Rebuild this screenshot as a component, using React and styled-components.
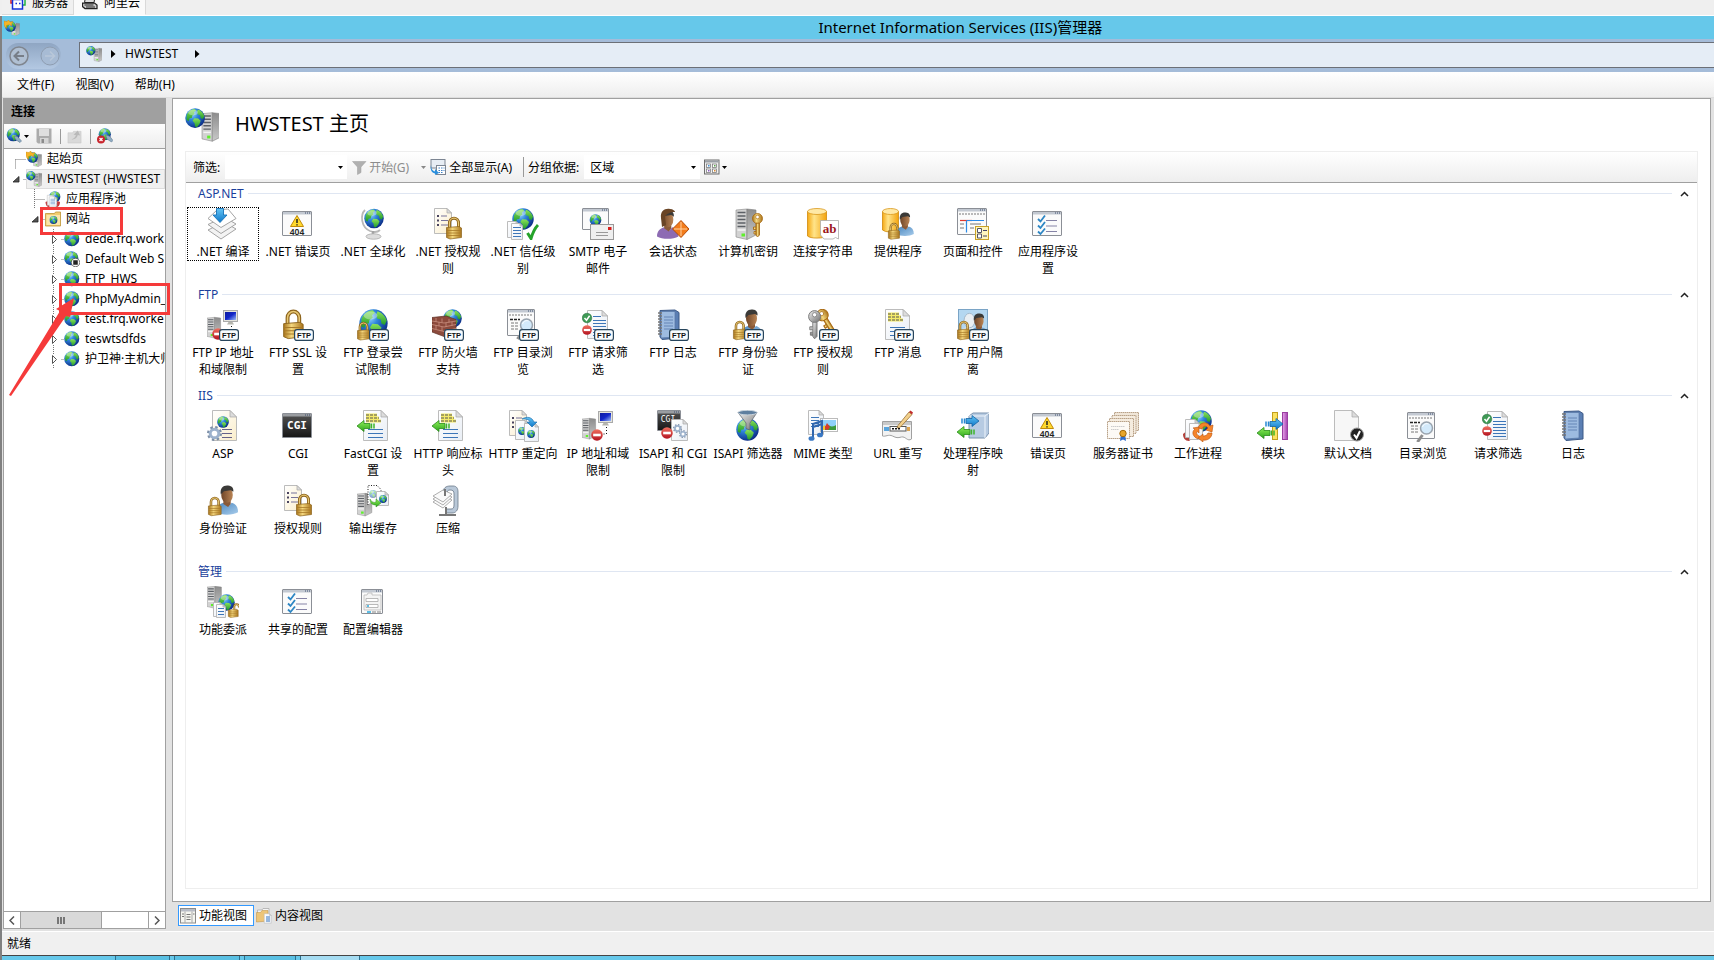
import React, { useState } from 'react'
import styled, { createGlobalStyle } from 'styled-components'

const GlobalStyle = createGlobalStyle`
* {
  box-sizing: border-box;
}
body {
  margin: 0;
  background: #f0f0f0;
  color: #000;
  font-family: 'Noto Sans', 'Noto Sans CJK SC', sans-serif;
  font-size: 12px;
  line-height: 17px;
}
button, input, select {
  font: inherit;
  color: inherit;
  margin: 0;
  padding: 0;
  border: 0;
  background: none;
}
svg {
  display: block;
  flex: none;
}
`

// ---------- drawing parts ----------

const Defs = () => (
  <defs>
    <radialGradient id="globe" cx="35%" cy="28%" r="75%">
      <stop offset="0" stopColor="#9fdcff" />
      <stop offset="0.4" stopColor="#2f86dc" />
      <stop offset="1" stopColor="#0b2c86" />
    </radialGradient>
    <linearGradient id="land" x1="0" y1="0" x2="0" y2="1">
      <stop offset="0" stopColor="#8be25a" />
      <stop offset="1" stopColor="#1f9a2c" />
    </linearGradient>
    <linearGradient id="gold" x1="0" y1="0" x2="1" y2="0">
      <stop offset="0" stopColor="#a8741a" />
      <stop offset="0.4" stopColor="#f4d77e" />
      <stop offset="1" stopColor="#a9741b" />
    </linearGradient>
    <linearGradient id="yellow" x1="0" y1="0" x2="1" y2="0">
      <stop offset="0" stopColor="#f5a914" />
      <stop offset="0.35" stopColor="#ffe48a" />
      <stop offset="1" stopColor="#f3a40e" />
    </linearGradient>
    <linearGradient id="steel" x1="0" y1="0" x2="1" y2="1">
      <stop offset="0" stopColor="#f0f0f0" />
      <stop offset="1" stopColor="#6e6e6e" />
    </linearGradient>
    <linearGradient id="side" x1="0" y1="0" x2="0" y2="1">
      <stop offset="0" stopColor="#8c8c8c" />
      <stop offset="1" stopColor="#c9c9c9" />
    </linearGradient>
    <linearGradient id="dark" x1="0" y1="0" x2="0" y2="1">
      <stop offset="0" stopColor="#555" />
      <stop offset="1" stopColor="#161616" />
    </linearGradient>
    <linearGradient id="paper" x1="0" y1="0" x2="1" y2="1">
      <stop offset="0" stopColor="#fff" />
      <stop offset="1" stopColor="#e9eef5" />
    </linearGradient>
    <linearGradient id="cream" x1="0" y1="0" x2="1" y2="1">
      <stop offset="0" stopColor="#fff" />
      <stop offset="1" stopColor="#fbeecb" />
    </linearGradient>
    <linearGradient id="blue" x1="0" y1="0" x2="0" y2="1">
      <stop offset="0" stopColor="#63c4f5" />
      <stop offset="1" stopColor="#0f78c8" />
    </linearGradient>
    <linearGradient id="green" x1="0" y1="0" x2="0" y2="1">
      <stop offset="0" stopColor="#8ef05a" />
      <stop offset="1" stopColor="#2ea51c" />
    </linearGradient>
    <linearGradient id="red" x1="0" y1="0" x2="0" y2="1">
      <stop offset="0" stopColor="#f0705f" />
      <stop offset="1" stopColor="#b31220" />
    </linearGradient>
    <linearGradient id="skin" x1="0" y1="0" x2="1" y2="0">
      <stop offset="0" stopColor="#6f4528" />
      <stop offset="1" stopColor="#b98455" />
    </linearGradient>
    <linearGradient id="shirt" x1="0" y1="0" x2="1" y2="1">
      <stop offset="0" stopColor="#4784bd" />
      <stop offset="1" stopColor="#a9cdec" />
    </linearGradient>
    <linearGradient id="screen" x1="0" y1="0" x2="1" y2="1">
      <stop offset="0" stopColor="#0d1b9e" />
      <stop offset="0.5" stopColor="#1226c8" />
      <stop offset="1" stopColor="#9dbcf7" />
    </linearGradient>
    <linearGradient id="purple" x1="0" y1="0" x2="1" y2="0">
      <stop offset="0" stopColor="#e9a5ea" />
      <stop offset="1" stopColor="#a33fae" />
    </linearGradient>
  </defs>
)

// every part is drawn in its own box and then moved and scaled
const At = ({ x = 0, y = 0, s = 1, children }) => (
  <g transform={`translate(${x} ${y}) scale(${s})`}>{children}</g>
)

const Globe = ({ x, y, d }) => (
  <At x={x} y={y} s={d / 16}>
    <circle cx="8" cy="8" r="7.8" fill="url(#globe)" />
    <path d="M1.4 5.4C2.6 2.6 5 .9 7.6 .7L8.8 2 7.2 3.4 7.6 4.8 5.8 6 5.4 8 3.6 8.2 3 10.4 1.2 9.6Z" fill="url(#land)" />
    <path d="M10.2 1.2C12.8 2 14.6 4 15.3 6.4L14.2 8.8 12.4 8 12 5.8 10 5.2 9.6 3Z" fill="url(#land)" />
    <path d="M7.4 8.2L10.4 8.4 12.4 10.2 11.4 12.8 9.4 15.2 8 14.6 7.6 12 6 10.2Z" fill="url(#land)" />
    <ellipse cx="6.4" cy="3.6" rx="3.8" ry="2.2" fill="#fff" opacity="0.35" />
  </At>
)

const Page = ({ x, y, w, h, fill = 'url(#paper)', fold = 5 }) => (
  <At x={x} y={y}>
    <path d={`M.5 .5H${w - fold}L${w - 0.5} ${fold}V${h - 0.5}H.5Z`} fill={fill} stroke="#b4b4b4" strokeWidth="0.9" />
    <path d={`M${w - fold} .5V${fold}H${w - 0.5}Z`} fill="#dcdcdc" stroke="#a8a8a8" strokeWidth="0.7" />
  </At>
)

const Lines = ({ x, y, w, n, gap = 3, color = '#3d76b8' }) => (
  <g stroke={color} strokeWidth="1">
    {Array.from({ length: n }, (_, i) => (
      <path key={i} d={`M${x} ${y + i * gap + 0.5}h${w}`} />
    ))}
  </g>
)

const Bullets = () => (
  <g>
    <Page x={2} y={0} w={18} h={26} fill="url(#cream)" />
    <path d="M5 8h2M5 12.500h2M5 17h2" stroke="#4a4460" strokeWidth="2" />
    <path d="M9 8h6M9 12.500h7M9 17h7" stroke="#77739a" strokeWidth="1.200" />
  </g>
)

const Lock = ({ x, y, s = 1, open }) => (
  <At x={x} y={y} s={s}>
    <path d={open ? 'M9.500 10V5.500a3.500 3.500 0 0 1 7 0V7' : 'M3.500 11V6a4.500 4.800 0 0 1 9 0v5'} fill="none" stroke="#8d641c" strokeWidth="3" />
    <path d={open ? 'M9.500 10V5.500a3.500 3.500 0 0 1 7 0V7' : 'M3.500 11V6a4.500 4.800 0 0 1 9 0v5'} fill="none" stroke="#e8c874" strokeWidth="1.200" />
    <path d="M.5 10.500L13 9.500 15.500 11V20.500L4 22 .5 20.500Z" fill="url(#gold)" stroke="#8d641c" strokeWidth="0.700" />
    <path d="M1 13.500h14M1 16h14M1 18.500h14" stroke="#a87a28" strokeWidth="0.800" />
  </At>
)

const Server = ({ x, y, s = 1 }) => (
  <At x={x} y={y} s={s}>
    <path d="M0 1.500L11 .5V31L0 28.500Z" fill="#d2d2d2" stroke="#858585" strokeWidth="0.600" />
    <path d="M11 .5L20 1.500V26.500L11 31Z" fill="url(#side)" stroke="#7c7c7c" strokeWidth="0.600" />
    <path d="M1.500 4h8M1.500 7.500h8M1.500 11h8M1.500 14.500h8M1.500 18h8" stroke="#5c6066" strokeWidth="1.500" />
    <path d="M1.500 21.500h8" stroke="#f4f4f4" strokeWidth="1.500" />
    <rect x="5.500" y="25" width="3.500" height="3" fill="#5ff02c" />
  </At>
)

const Win = ({ x, y, w, h, dark }) => (
  <At x={x} y={y}>
    <rect x="0.500" y="0.500" width={w - 1} height={h - 1} rx="0.500" fill={dark ? 'url(#dark)' : '#fbfbfb'} stroke="#8b8f96" />
    <rect x="1" y="1" width={w - 2} height="2.500" fill={dark ? '#9a9da1' : '#c3c9d2'} />
    <path d={`M${w - 7} 2h1M${w - 5} 2h1M${w - 3} 2h1`} stroke="#3c4e6e" strokeWidth="1.200" />
  </At>
)

const Person = ({ x, y, s = 1, shirt = 'url(#shirt)' }) => (
  <At x={x} y={y} s={s}>
    <path d="M0 26c0-5 3-8 7-9l5 3 3-3c4 1 6 4 6 9-5 3-16 3-21 0Z" fill={shirt} />
    <path d="M7 15h7v3l-2.500 3L7 18Z" fill="#8a5a38" />
    <ellipse cx="10.500" cy="9.500" rx="5.500" ry="7.500" fill="url(#skin)" />
    <path d="M4.600 9C3.500 3 7 0 11.500 .5c4 .2 5.500 3 5 6L14 5 7.500 6Z" fill="#3b3a38" />
  </At>
)

const NoEntry = ({ x, y, d = 11 }) => (
  <At x={x} y={y} s={d / 11}>
    <circle cx="5.500" cy="5.500" r="5.300" fill="url(#red)" />
    <rect x="2" y="4.300" width="7" height="2.400" fill="#fff" />
  </At>
)

const Tick = ({ x, y, d = 10 }) => (
  <At x={x} y={y} s={d / 10}>
    <circle cx="5" cy="5" r="4.800" fill="#3f9a55" stroke="#23693a" strokeWidth="0.500" />
    <path d="M2.500 5L4.500 7.200 7.600 2.800" fill="none" stroke="#fff" strokeWidth="1.500" />
  </At>
)

const Monitor = ({ x, y }) => (
  <At x={x} y={y}>
    <rect x="0.500" y="0.500" width="14" height="11" fill="#e4e4dc" stroke="#aaa" />
    <rect x="2" y="2" width="11" height="8" fill="url(#screen)" />
    <path d="M5.500 12h4l1.500 2.500h-7Z" fill="#b5b5ad" />
  </At>
)

const Gear = ({ x, y, d, color = '#9db2cc' }) => (
  <At x={x} y={y} s={d / 16}>
    <circle cx="8" cy="8" r="6.500" fill="none" stroke="#7c8ea6" strokeWidth="3" strokeDasharray="2.500 2.600" />
    <circle cx="8" cy="8" r="4.600" fill="#fff" stroke={color} strokeWidth="3.200" />
  </At>
)

const Badge = () => (
  <g>
    <rect x="12.600" y="20.600" width="18.800" height="10.800" rx="2.500" fill="#f7fbfd" stroke="#27455c" strokeWidth="1.200" />
    <text x="22" y="29" textAnchor="middle" fontFamily="Liberation Sans" fontWeight="700" fontSize="7.500" fill="#111">FTP</text>
  </g>
)

const LeftArrow = ({ x, y }) => (
  <At x={x} y={y}>
    <path d="M0 6L7 .5V3.500H13V8.500H7V11.500Z" fill="url(#green)" stroke="#2a8a1c" strokeWidth="0.800" />
    <path d="M14.500 3.500v5M17 3.500v5" stroke="#3fb52b" strokeWidth="1.500" />
  </At>
)

const RightArrow = ({ x, y }) => (
  <At x={x} y={y}>
    <path d="M20 6L13 .5V3.500H7V8.500H13V11.500Z" fill="url(#blue)" stroke="#1464a5" strokeWidth="0.800" />
    <path d="M5.500 3.500v5M3 3.500v5" stroke="#2789d4" strokeWidth="1.500" />
  </At>
)

const NotFound = () => (
  <g>
    <Win x={0} y={3} w={30} h={25} />
    <path d="M15 7.500L21.500 18.500H8.500Z" fill="#ffd92e" stroke="#c28a08" strokeLinejoin="round" />
    <path d="M15 11v4M15 16.300v1.200" stroke="#222" strokeWidth="1.500" />
    <text x="15" y="26.500" textAnchor="middle" fontFamily="Noto Sans" fontSize="8.500" fontWeight="600" fill="#222">404</text>
  </g>
)

const CheckList = () => (
  <g>
    <Win x={0} y={3} w={30} h={25} />
    <path d="M6 11l2.500 2.500L13 7.500M6 17.500L8.500 20 13 14M6 23.500L8.500 26 13 20.500" fill="none" stroke="#2d86c4" strokeWidth="1.800" />
    <path d="M14 12.500h11M14 18h11M14 23.500h11" stroke="#8583a6" />
  </g>
)

const Book = () => (
  <g>
    <path d="M3 1.500L18 1 22 3.500V29L5 30.500 3 28Z" fill="#5b7fb4" stroke="#3d5a87" />
    <path d="M4 2.500h14v25.500L4 29Z" fill="#9dbbe0" stroke="#5877a5" strokeWidth="0.700" />
    <path d="M7 8h9M7 11h9M7 14h9M7 17h9M7 20h9" stroke="#6485b6" />
    <path d="M1 4h4M1 7h4M1 10h4M1 13h4M1 16h4M1 19h4M1 22h4M1 25h4" stroke="#777" strokeWidth="1.300" />
  </g>
)

const Browse = () => (
  <g>
    <Win x={0} y={0} w={28} h={27} />
    <path d="M2 6h24" stroke="#b9b9b9" strokeWidth="2" strokeDasharray="2 1" />
    <path d="M3 10.500h10" stroke="#222" strokeWidth="1.500" strokeDasharray="3 1" />
    <path d="M4 14h7M4 17h7M4 20h7" stroke="#777" strokeDasharray="3 1" />
    <path d="M15.500 23L10.500 30" stroke="#8d8d8d" strokeWidth="3" />
    <circle cx="19.500" cy="16" r="6" fill="#d3eafb" stroke="#9aa4ae" strokeWidth="1.500" />
    <path d="M15.500 15c1-3 4-4 6-3" stroke="#fff" fill="none" />
  </g>
)

const RequestFilter = () => (
  <g>
    <Page x={5} y={1} w={21} h={29} fold={6} />
    <Lines x={11} y={7} w={8} n={1} />
    <Lines x={11} y={11} w={13} n={6} />
    <Tick x={0} y={4} d={10} />
    <NoEntry x={0} y={16} d={10} />
  </g>
)

const Wall = () => (
  <g>
    <Globe x={11} y={0} d={19} />
    <path d="M0 8.500L14 7 24 10.500V26L12 27.500 0 23Z" fill="#8c4a3c" stroke="#5f3027" strokeWidth="0.700" />
    <path d="M0 12l12 2 12-2M0 15.500l12 2.500 12-2.500M0 19.500l12 3 12-3M4 9v4M10 9.500v4M17 10v3.500M7 13v4M14 14v4M20 13v4M4 16v4M10 18v4" fill="none" stroke="#c99080" strokeWidth="0.800" />
  </g>
)

const Key = ({ x, y, s = 1, fill = 'url(#gold)', line = '#a7670f' }) => (
  <At x={x} y={y} s={s}>
    <circle cx="5.500" cy="5.500" r="5" fill={fill} stroke={line} strokeWidth="0.800" />
    <circle cx="5.500" cy="4" r="1.800" fill="#fff" stroke={line} strokeWidth="0.600" />
    <path d="M4 10.200h3.500V22L5.500 24 4 22Z" fill={fill} stroke={line} strokeWidth="0.800" />
    <path d="M4 14H1.500v2.500H4M4 18.500H2v2.500h2" fill={fill} stroke={line} strokeWidth="0.800" />
  </At>
)

const Cylinder = ({ x, y, w, h }) => (
  <At x={x} y={y}>
    <path d={`M.5 3.500V${h - 3}a${w / 2} 3 0 0 0 ${w - 1} 0V3.500Z`} fill="url(#yellow)" stroke="#d08a0c" strokeWidth="0.800" />
    <ellipse cx={w / 2} cy="3.500" rx={w / 2 - 0.5} ry="3" fill="#ffe9a6" stroke="#d9981c" strokeWidth="0.800" />
  </At>
)

const Forbidden = () => (
  <g>
    <Server x={0} y={8} s={0.68} />
    <Monitor x={16} y={1} />
    <path d="M24.500 17v7h-6" fill="none" stroke="#111" strokeDasharray="1 2" />
  </g>
)

// page with the marked text block used by the header and message features
const MarkedText = ({ x, y }) => (
  <At x={x} y={y}>
    <path d="M0 2h11M0 5h13M0 8h15" stroke="#f4ea6a" strokeWidth="3" />
    <path d="M0 2h11M0 5h13M0 8h15" stroke="#555" strokeDasharray="3 1" />
  </At>
)

const FastPage = () => (
  <g>
    <Page x={6} y={0} w={25} h={31} fold={7} />
    <MarkedText x={9} y={3} />
    <Lines x={11} y={19} w={15} n={3} gap={4} />
    <LeftArrow x={0} y={10} />
  </g>
)

const art = {
  compile: (
    <g stroke="#9a9a9a" strokeWidth="0.900" fill="#f3f3f3">
      <path d="M1 22L14 31 29 21 17 14Z" />
      <path d="M1 16.500L14 25.500 29 16 17 9Z" />
      <path d="M1 10.500L14 19.500 29 10.500 21 1 10 2Z" fill="#fff" />
      <path d="M9.500 .5h7v6.500H20L13 14.500 6 7h3.500Z" fill="url(#blue)" stroke="#1672b8" />
    </g>
  ),
  notFound: <NotFound />,
  globalize: (
    <g>
      <path d="M8 2C3 7 4 19 13 23c4 1.500 8 1 10-1" fill="none" stroke="#b8b8b8" strokeWidth="1.800" />
      <Globe x={7} y={0.500} d={20} />
      <path d="M16 23v4" stroke="#a4a4a4" strokeWidth="2.500" />
      <ellipse cx="16.500" cy="28.500" rx="7.500" ry="2.700" fill="#ddd" stroke="#aaa" strokeWidth="0.800" />
    </g>
  ),
  authorize: <g><Bullets /><Lock x={14} y={9} /></g>,
  trust: (
    <g>
      <Globe x={5} y={0} d={22} />
      <Page x={0} y={13} w={12} h={17} fold={3} />
      <Page x={4} y={15} w={12} h={17} fold={3} />
      <Lines x={6} y={19} w={8} n={4} />
      <path d="M20.500 25l3.500 5.500C26 24 28 20 31 17" fill="none" stroke="#25a32a" strokeWidth="3" />
    </g>
  ),
  smtp: (
    <g>
      <Win x={0} y={0} w={27} h={22} />
      <Globe x={7.500} y={6} d={12} />
      <rect x="8.500" y="16.500" width="23" height="15" fill="#efefef" stroke="#999" />
      <rect x="26" y="19" width="3.500" height="3" fill="#d8201e" />
      <path d="M14 24.500h12M14 27.500h12" stroke="#999" />
    </g>
  ),
  session: (
    <g>
      <Person x={0} y={2} shirt="#8d6bb3" s={1.020} />
      <path d="M4 10C3 3 8 0 13 1c3 0 5 2 5 3-5 0-9 2-10 5l1 8-4 2Z" fill="#694425" />
      <path d="M24 12.500L32 21 24 29.500 15.500 21Z" fill="#f27c1b" stroke="#b64d0a" />
      <path d="M17 21h13M24 14v14" stroke="#ffd0a0" />
    </g>
  ),
  machineKey: <g><Server x={4} y={0.500} /><Key x={20} y={5} /></g>,
  connString: (
    <g>
      <Cylinder x={0} y={0} w={20} h={31} />
      <path d="M13.500 12.500H31.500V31l-3-1.500L26 31H17l-3.500-4Z" fill="#fff" stroke="#aaa" strokeWidth="0.800" />
      <text x="22.500" y="25" textAnchor="middle" fontFamily="Liberation Serif" fontWeight="700" fontSize="13" fill="#9c1620">ab</text>
    </g>
  ),
  provider: (
    <g>
      <Cylinder x={0} y={0} w={17} h={25} />
      <Person x={14} y={4} s={0.850} />
      <Lock x={6} y={15} s={0.740} />
    </g>
  ),
  pages: (
    <g>
      <Win x={0} y={0} w={30} h={27} />
      <path d="M2 6h26" stroke="#b9b9b9" strokeWidth="2" strokeDasharray="2 1" />
      <path d="M3 12.500h12" stroke="#e2382c" strokeWidth="1.200" />
      <path d="M9.500 12.500v12M10 12.500h17" stroke="#2b8be8" strokeWidth="1.200" />
      <path d="M3 16h4M3 20h4M13 16h11M13 20h4" stroke="#777" />
      <rect x="18.500" y="18.500" width="13" height="13" fill="#fff6bd" stroke="#c9a227" />
      <path d="M20.500 20.500h4v4h-4zM20.500 26h4v4h-4z" fill="#fff" stroke="#556" />
      <path d="M26 22.500h4M26 28h4" stroke="#446" />
    </g>
  ),
  checkList: <CheckList />,
  ftpIp: <g><Forbidden /><NoEntry x={5} y={19} d={12} /><Badge /></g>,
  ftpSsl: <g><Lock x={1} y={1} s={1.300} /><Badge /></g>,
  ftpLogin: <g><Globe x={2} y={0} d={29} /><Lock x={0} y={13} s={0.820} /><Badge /></g>,
  ftpWall: <g><Wall /><Badge /></g>,
  ftpBrowse: <g><Browse /><Badge /></g>,
  ftpFilter: <g><RequestFilter /><Badge /></g>,
  ftpLog: <g><Book /><Badge /></g>,
  ftpAuth: <g><Person x={9} y={0} /><Lock x={1} y={12} s={0.850} /><Badge /></g>,
  ftpRules: (
    <g>
      <g transform="rotate(-32 15 6)"><Key x={9} y={0} s={1.150} /></g>
      <Key x={1} y={1} s={1.200} fill="url(#steel)" line="#777" />
      <Badge />
    </g>
  ),
  ftpMessage: (
    <g>
      <Page x={3} y={0} w={25} h={31} fold={7} />
      <MarkedText x={6} y={3} />
      <Lines x={8} y={18} w={15} n={3} gap={4} />
      <Badge />
    </g>
  ),
  ftpIsolate: (
    <g>
      <rect x="1.500" y="0.500" width="29" height="28" fill="#b4d7f0" stroke="#7aa4c6" />
      <At x={3} y={3} s={0.900}>
        <path d="M0 26c0-5 3-8 7-9h8c4 1 6 4 6 9Z" fill="#dfe7ee" />
        <ellipse cx="10.500" cy="9.500" rx="6" ry="8" fill="#e9eef2" stroke="#9fb4c6" />
      </At>
      <Person x={13} y={4} s={0.850} />
      <Lock x={0} y={12} s={0.850} />
      <Badge />
    </g>
  ),
  asp: (
    <g>
      <Page x={5} y={0} w={25} h={31} fill="url(#cream)" fold={7} />
      <Globe x={10} y={6} d={12} />
      <path d="M15 19.500h10M15 23.500h10M15 27.500h10" stroke="#67638a" />
      <Gear x={0} y={16} d={15} />
    </g>
  ),
  cgi: (
    <g>
      <Win x={0} y={3} w={30} h={25} dark />
      <text x="15" y="19" textAnchor="middle" fontFamily="DejaVu Sans Mono" fontWeight="700" fontSize="11" fill="#fff">CGI</text>
    </g>
  ),
  fastCgi: <FastPage />,
  redirect: (
    <g>
      <Bullets />
      <Page x={8} y={10} w={14} h={20} fold={4} />
      <Globe x={11} y={17} d={8} />
      <Page x={17} y={13} w={15} h={19} fold={4} />
      <Globe x={20} y={20} d={8} />
      <path d="M15 9c5-3 10-2 12 3h3l-5 5-5-5h3c-1-3-4-3-8-3Z" fill="url(#blue)" stroke="#1464a5" strokeWidth="0.600" />
    </g>
  ),
  ipLimit: <g><Forbidden /><NoEntry x={9} y={19} d={12} /></g>,
  isapiLimit: (
    <g>
      <Win x={0} y={0} w={24} h={21} dark />
      <text x="11" y="12" textAnchor="middle" fontFamily="DejaVu Sans Mono" fontSize="8" fill="#fff">CGI</text>
      <Page x={14} y={9} w={17} h={22} fold={5} />
      <Gear x={16} y={14} d={9} />
      <Gear x={22} y={20} d={8} />
      <NoEntry x={4} y={17} d={12} />
    </g>
  ),
  isapiFilter: (
    <g>
      <Globe x={4} y={8} d={23} />
      <path d="M6 2.500L14 13v5.500l4 1.500v-7l7-10.500Z" fill="url(#steel)" stroke="#56606c" strokeWidth="0.700" />
      <ellipse cx="15.500" cy="2.600" rx="9.500" ry="2.300" fill="#5f7f9f" stroke="#c9d3dc" />
    </g>
  ),
  mime: (
    <g>
      <Page x={1} y={0} w={16} h={25} fold={5} />
      <Lines x={4} y={7} w={8} n={4} />
      <rect x="13.500" y="8.500" width="17" height="13" fill="#fff" stroke="#bbb" />
      <rect x="15" y="10" width="14" height="10" fill="#8fd0fa" />
      <path d="M17 20c1-4 3-7 6-4 2 1 5 0 6-1v5Z" fill="#3c9a3e" />
      <path d="M17 19l3-6 3 4-2 3Z" fill="#d83a2c" />
      <path d="M15 17l3-2v5h-3z" fill="#f3c52e" />
      <path d="M6 28V14l9-3v13M6 17l9-3" fill="none" stroke="#2f66ae" strokeWidth="2" />
      <ellipse cx="4.500" cy="28.500" rx="3" ry="2.300" fill="#3b79c4" />
      <ellipse cx="13" cy="25" rx="3" ry="2.300" fill="#3b79c4" />
    </g>
  ),
  rewrite: (
    <g>
      <path d="M.5 11.500H29.500V29c-4 3-6-3-10-2s-5 1-9-1-7 1-10 0Z" fill="#f2f2f2" stroke="#a0a0a0" />
      <rect x="1" y="12" width="28" height="3" fill="#c9c9c9" />
      <rect x="2" y="17" width="5" height="4" fill="#5aa5dc" />
      <rect x="8" y="16.500" width="16" height="4.500" fill="#fff" stroke="#555" />
      <path d="M10 18.700h9" stroke="#111" strokeWidth="1.500" strokeDasharray="2 1" />
      <rect x="25" y="17" width="3" height="4" fill="#dca552" />
      <path d="M16 15.500L27 2l3 2.500L18.500 17l-3.500 1Z" fill="#f2d08c" stroke="#8c6222" strokeWidth="0.700" />
      <path d="M27 2l1.500-1.500L31 2.500 30 4.500Z" fill="#c22c2c" />
    </g>
  ),
  handler: (
    <g>
      <path d="M12 6l4-3h16v20l-4 5H12Z" fill="#b7cbe2" stroke="#7b93ae" />
      <path d="M12 6h16v22M28 6l4-3" fill="none" stroke="#eef4fb" />
      <RightArrow x={2} y={5} />
      <LeftArrow x={0} y={16} />
    </g>
  ),
  certificate: (
    <g stroke="#b9a288" strokeDasharray="1.500 0.500">
      <rect x="7.500" y="2.500" width="24" height="18" fill="#f0e6d8" />
      <rect x="5" y="5.500" width="24" height="18" fill="#f5ecdf" />
      <rect x="2.500" y="8.500" width="24" height="18" fill="#f5ecdf" />
      <rect x="0.500" y="11.500" width="22" height="17" fill="#fdfaf5" />
      <path d="M4 16.500h14M4 19.500h8" stroke="#ccc" />
      <path d="M14 24l-1 7 3-1.500 3 1.500-1-7Z" fill="#2f6fd0" stroke="none" />
      <circle cx="16" cy="23.500" r="3.200" fill="#e7a52a" stroke="#a36b0c" strokeDasharray="none" />
    </g>
  ),
  worker: (
    <g>
      <Globe x={8} y={0} d={22} />
      <path d="M1 24l5-4 5 8-4 3c-4 0-6-3-6-7Z" fill="#b3403a" />
      <Page x={3} y={9} w={14} h={19} fold={4} />
      <Page x={7} y={13} w={14} h={17} fold={4} />
      <path d="M16 18c2-6 9-7 12-2l3-1-1 7-6-2 2-2c-2-3-5-2-6 1Z" fill="#f5842a" stroke="#b9530c" strokeWidth="0.600" />
      <path d="M30 23c0 5-5 8-9 7v2l-5-4 5-4v2c3 0 4-1 5-3Z" fill="#f5842a" stroke="#b9530c" strokeWidth="0.600" />
      <path d="M16 29c-5-2-7-7-3-10l-2-1 6-1v6l-1.500-1.500c-2 2 0 4 2 4.500Z" fill="#f5842a" stroke="#b9530c" strokeWidth="0.600" />
    </g>
  ),
  modules: (
    <g>
      <rect x="15.500" y="2.500" width="5" height="27" fill="#fbe25f" stroke="#c29f1e" />
      <rect x="25.500" y="2.500" width="5" height="27" fill="url(#purple)" stroke="#9a3fa0" />
      <RightArrow x={6} y={8} />
      <LeftArrow x={0} y={17} />
    </g>
  ),
  defaultDoc: (
    <g>
      <Page x={2} y={0} w={25} h={31} fill="#f7f7f7" fold={7} />
      <circle cx="25" cy="24.500" r="6.500" fill="#222" stroke="#999" />
      <path d="M22 24.500l2.500 3.500 3.500-7" fill="none" stroke="#fff" strokeWidth="2" />
    </g>
  ),
  browse: <At y={2}><Browse /></At>,
  requestFilter: <RequestFilter />,
  log: <At x={4}><Book /></At>,
  identity: <g><Person x={9} y={0} s={1.050} /><Lock x={1} y={12} s={0.850} /></g>,
  outputCache: (
    <g>
      <Server x={0} y={8} s={0.740} />
      <path d="M11 20V.5H20l4 4V8" fill="#fff" stroke="#222" strokeDasharray="1 1.500" />
      <g opacity="0.500"><Globe x={12} y={5} d={8} /></g>
      <Page x={19} y={6} w={13} h={15} fold={4} />
      <Globe x={22} y={10} d={8} />
      <path d="M13 14c1 3 4 4 6 3v-3l5 4-5 4v-2c-4 0-6-2-6-6Z" fill="url(#green)" stroke="#2a8a1c" strokeWidth="0.500" />
    </g>
  ),
  compress: (
    <g>
      <path d="M11 8C11 3 14 1 18 1h3c4 0 5 3 5 6v14c0 4-2 7-6 7h-6v-4h5c2 0 3-1 3-4V9c0-3-1-4-4-4-2 0-3 1-3 4Z" fill="#b9c8d8" stroke="#6a7989" strokeWidth="0.800" />
      <g fill="#fafafa" stroke="#999" strokeWidth="0.800">
        <path d="M1 17l10 6 9-8-9-5Z" />
        <path d="M1 14l10 6 9-8-9-5Z" />
        <path d="M1 11l10 6 9-8-9-4Z" />
      </g>
      <path d="M13 4v7M14 22v8M7 30h17" stroke="#777" strokeWidth="2" />
    </g>
  ),
  delegate: (
    <g>
      <Server x={0} y={0} s={0.720} />
      <Globe x={11} y={8} d={17} />
      <Page x={6} y={16} w={10} h={15} fold={3} />
      <Page x={9} y={18} w={10} h={14} fold={3} />
      <Lines x={11} y={22} w={6} n={3} />
      <Lock x={21} y={17} s={0.660} open />
    </g>
  ),
  editor: (
    <g>
      <Win x={4} y={3} w={22} h={25} />
      <path d="M7 9h3l1-2h4v2h9v15H7Z" fill="#f4f4f4" stroke="#bbb" strokeWidth="0.800" />
      <path d="M9 12.500h12v3H9zM9 18.500h12v3H9z" fill="#fff" stroke="#aaa" strokeWidth="0.800" />
      <path d="M10 20h2" stroke="#29a8de" strokeWidth="1.500" />
      <path d="M10 26h4" stroke="#29a8de" strokeWidth="1.500" />
      <path d="M15 26h4M20 26h4" stroke="#aaa" strokeWidth="1.500" />
    </g>
  ),
  // 16px drawings, kept in the same 32px box
  iis: (
    <g>
      <Server x={15} y={6} s={0.820} />
      <Globe x={2} y={2} d={22} />
      <path d="M0 2l6 1 3-3 3 4 6-1-3 5 1 4-6-3-5 2v6L2 14 0 9Z" fill="#f5b427" stroke="#c57f0c" strokeWidth="0.800" />
    </g>
  ),
  host: <g><Server x={16} y={4} s={0.880} /><Globe x={0} y={0} d={19} /></g>,
  pool: (
    <g>
      <Globe x={8} y={0} d={23} />
      <path d="M1 22l5-2 5 9-3 3c-4 0-7-4-7-10ZM30 22l-5-2-5 9 3 3c4 0 7-4 7-10Z" fill="#c23a3a" />
      <Page x={4} y={8} w={17} h={21} />
      <Page x={8} y={11} w={16} h={20} />
      <Lines x={11} y={16} w={9} n={4} />
    </g>
  ),
  sites: (
    <g>
      <path d="M1 5h18l2-3h10v28H1Z" fill="#f0cd70" stroke="#b98f2e" strokeWidth="1.500" />
      <path d="M3 8h27v20H3z" fill="#fae6a8" />
      <Globe x={9} y={10} d={16} />
    </g>
  ),
  site: <Globe x={0} y={0} d={31} />,
  siteStopped: (
    <g>
      <Globe x={0} y={0} d={29} />
      <circle cx="23" cy="23" r="8.500" fill="#f7f7f7" stroke="#444" strokeWidth="1.500" />
      <rect x="18.500" y="18.500" width="9" height="9" fill="#222" />
    </g>
  ),
  connect: (
    <g>
      <Globe x={1} y={0} d={27} />
      <path d="M16 16l7 1 8 9-3 3-9-6Z" fill="#93aec4" stroke="#4b6a84" />
    </g>
  ),
  save: (
    <g>
      <path d="M1 1h30v30H4L1 28Z" fill="#ababab" />
      <rect x="6" y="2" width="20" height="14" fill="#dedede" />
      <rect x="8" y="20" width="17" height="11" fill="#d5d5d5" />
      <rect x="11" y="22" width="5" height="8" fill="#8c8c8c" />
    </g>
  ),
  up: (
    <g>
      <path d="M2 8h10l2-3h16v25H2Z" fill="#d9d9d9" stroke="#c4c4c4" />
      <path d="M9 22c6-1 9-4 10-9l-5-1 9-9 5 11-5-1c-2 7-7 10-14 9Z" fill="#b9b9b9" />
    </g>
  ),
  disconnect: (
    <g>
      <Globe x={3} y={0} d={25} />
      <path d="M17 14l8 2 7 9-3 3-9-6Z" fill="#93aec4" stroke="#4b6a84" />
      <circle cx="8" cy="23" r="8" fill="#c9252d" />
      <path d="M5 20l6 6M11 20l-6 6" stroke="#fff" strokeWidth="2.500" />
    </g>
  ),
  funnel: <path d="M3 5h27L20 16v11l-7 4V16Z" fill="#b0b0b0" stroke="#9d9d9d" />,
  showAll: (
    <g>
      <rect x="2" y="1" width="28" height="17" fill="#e7edf4" stroke="#7c8592" strokeWidth="2" />
      <rect x="13" y="13" width="18" height="18" fill="#fff" stroke="#7c8592" strokeWidth="2" />
      <path d="M17 18h3M22 18h3M27 18h2M17 23h3M22 23h3M27 23h2M17 27h3M22 27h3" stroke="#3c7fc4" strokeWidth="2" />
      <path d="M2 12c0 8 3 12 8 13v-5l8 8-8 4v-3C3 27 0 22 2 12Z" fill="#2a8fdd" />
    </g>
  ),
  viewGrid: (
    <g>
      <rect x="1" y="2" width="29" height="28" fill="#eee" stroke="#6d6d6d" strokeWidth="2" />
      <rect x="2" y="3" width="27" height="4" fill="#9a9fa6" />
      <g fill="#fff" stroke="#777" strokeWidth="1.500">
        <rect x="5" y="10" width="8" height="7" /><rect x="17" y="10" width="8" height="7" />
        <rect x="5" y="20" width="8" height="7" /><rect x="17" y="20" width="8" height="7" />
      </g>
      <path d="M8 13.500h3" stroke="#3f8fd6" strokeWidth="3" /><path d="M20 13.500h3" stroke="#57a84a" strokeWidth="3" />
      <path d="M8 23.500h3" stroke="#8a5cc0" strokeWidth="3" /><path d="M20 23.500h3" stroke="#d98a32" strokeWidth="3" />
    </g>
  ),
  features: (
    <g>
      <rect x="1" y="1" width="30" height="29" fill="#f6f6f0" stroke="#8a8a8a" strokeWidth="2" />
      <rect x="2" y="2" width="28" height="5" fill="#b8bcc6" />
      <path d="M10 7v23M24 7v23" stroke="#aaa" strokeWidth="2" />
      <path d="M13 13h8M13 18h8M13 23h8M4 12h4M4 17h4M26 12h3" stroke="#777" strokeWidth="2" />
    </g>
  ),
  content: (
    <g>
      <path d="M3 4h9l2-3h12v24H3Z" fill="#f5f5f5" stroke="#a8a8a8" strokeWidth="1.500" />
      <path d="M1 9h8l3-4h12v21L1 28Z" fill="#edc578" stroke="#bb8d3c" />
      <Page x={16} y={11} w={15} h={20} fold={4} />
      <path d="M20 18h8M20 22h8M20 26h8" stroke="#3b79c4" strokeWidth="2" />
    </g>
  ),
  servers: (
    <g fill="#fff" strokeWidth="3">
      <rect x="2" y="-4" width="20" height="22" stroke="#e02020" />
      <rect x="8" y="0" width="22" height="22" stroke="#20b040" />
      <rect x="5" y="7" width="20" height="23" stroke="#1530d8" />
      <path d="M5 11h20M11 19h3M18 19h3" stroke="#1530d8" />
    </g>
  ),
  machine: (
    <g>
      <path d="M8 1h19l-3 16H5Z" fill="#ddd" stroke="#222" strokeWidth="2" />
      <path d="M1 18h24l5 4v7H6l-5-4Z" fill="#ccc" stroke="#222" strokeWidth="2.500" />
      <path d="M5 22h18M8 26h18" stroke="#222" strokeWidth="2" />
    </g>
  )
}

const Icon = ({ name, size = 16, defs }) => (
  <svg width={size} height={size} viewBox="0 0 32 32" aria-hidden="true">
    {defs && <Defs />}
    {art[name]}
  </svg>
)

const Caret = ({ color = '#000' }) => (
  <svg width="5" height="3" viewBox="0 0 5 3" aria-hidden="true">
    <path d="M0 0h5L2.500 3Z" fill={color} />
  </svg>
)

const Crumb = () => (
  <svg width="5" height="8" viewBox="0 0 5 8" aria-hidden="true">
    <path d="M0 0l4.500 4L0 8Z" fill="#000" />
  </svg>
)

// ---------- shell ----------

const Screen = styled.div`
position: relative;
display: flex;
flex-direction: column;
height: 100vh;
overflow: hidden;
`

const HostTabs = styled.div`
display: flex;
flex: none;
height: 16px;
padding-left: 2px;
background: #efefef;
border-bottom: 1px solid #fff;
overflow: hidden;
`

const HostTab = styled.button`
display: flex;
align-items: flex-end;
gap: 6px;
padding: 0 5px 4px 8px;
border-right: 1px solid #d9d9d9;
border-bottom: 1px solid ${props => (props.$on ? '#fafafa' : '#d9d9d9')};
background: ${props => (props.$on ? '#fafafa' : '#f0f0f0')};
line-height: 14px;
`

const Frame = styled.div`
display: flex;
flex: 1;
flex-direction: column;
min-height: 0;
border-left: 2px solid #808080;
`

const TitleBar = styled.header`
display: grid;
grid-template-columns: 16px 1fr;
align-items: center;
flex: none;
height: 23px;
padding: 0 2px;
background: #66c8ea;
font-size: 15px;
text-align: center;
`

// the window runs on past the right edge of the screen
const TitleText = styled.span`
padding-left: 11vw;
`

const AddressRow = styled.div`
display: flex;
align-items: center;
flex: none;
height: 33px;
padding-left: 4px;
gap: 18px;
background: #a5bcd9;
`

const Address = styled.nav`
display: flex;
flex: 1;
align-items: center;
height: 26px;
margin-bottom: 2px;
padding: 0 6px 2px;
gap: 9px;
border: 1px solid #6c7077;
border-right: 0;
background: #e5edf6;
`

const CrumbLink = styled.a`
padding: 0 8px 0 0;
color: #000;
text-decoration: none;
`

const NavPair = styled.div`
display: flex;
align-items: center;
gap: 11px;
height: 26px;
padding: 0 1px 0 3px;
border-radius: 12px;
background: linear-gradient(#8fa6c3, #b3c8e2);
`

const NavButton = styled.button`
display: block;
height: 20px;
`

const MenuBar = styled.nav`
display: flex;
align-items: center;
flex: none;
height: 26px;
padding: 0 15px;
gap: 21px;
border-bottom: 1px solid #dedede;
background: linear-gradient(#fff, #eee);
`

const Work = styled.div`
display: grid;
grid-template-columns: 163px 1fr;
flex: 1;
min-height: 0;
gap: 6px;
padding: 0 3px 2px 1px;
background: #e2e2e2;
`

// ---------- connections ----------

const Side = styled.aside`
display: flex;
flex-direction: column;
min-width: 0;
min-height: 0;
border: 1px solid #a0a0a0;
background: #fff;
`

const SideTitle = styled.h2`
margin: 0;
padding: 4px 7px;
background: #a0a0a0;
font-size: 12px;
font-weight: 700;
`

const SideTools = styled.div`
display: flex;
align-items: center;
height: 25px;
padding: 0 2px;
gap: 6px;
border-bottom: 1px solid #a0a0a0;
background: linear-gradient(#fdfdfd, #ededed);
`

const ToolButton = styled.button`
display: flex;
align-items: center;
gap: ${props => props.$gap || 2}px;
margin-left: ${props => props.$before || 0}px;
color: ${props => (props.disabled ? '#8c8c8c' : '#000')};
white-space: nowrap;
`

const Divider = styled.span`
width: 1px;
height: ${props => props.$h}px;
margin-left: ${props => props.$before}px;
background: #999;
`

const Tree = styled.ul`
flex: 1;
margin: 0;
padding: 0;
overflow: hidden;
list-style: none;
`

const TreeRow = styled.li`
display: flex;
align-items: center;
height: 20px;
padding-left: ${props => 8 + props.$level * 19}px;
white-space: nowrap;
`

const TreeLink = styled.a`
display: flex;
flex: 1;
align-items: center;
gap: 5px;
height: 20px;
min-width: 0;
overflow: hidden;
background: ${props => (props.$on ? '#f0f0f0' : 'none')};
box-shadow: ${props => (props.$on ? 'inset 0 0 0 1px #dcdcdc' : 'none')};
color: #000;
text-decoration: none;
span {
  padding-bottom: 2px;
}
`

const ScrollBar = styled.div`
display: grid;
grid-template-columns: 17px 1fr 17px;
height: 17px;
border-top: 1px solid #a0a0a0;
background: #fff;
`

const ScrollButton = styled.button`
display: grid;
place-items: center;
border: 0 solid #a0a0a0;
border-width: ${props => (props.$end ? '0 0 0 1px' : '0 1px 0 0')};
`

const Thumb = styled.div`
display: grid;
place-items: center;
width: 81px;
border-right: 1px solid #a0a0a0;
background: #d9d9d9;
`

// ---------- home pane ----------

const MainColumn = styled.div`
display: flex;
flex-direction: column;
min-width: 0;
min-height: 0;
`

const Home = styled.main`
display: flex;
flex: 1;
flex-direction: column;
min-height: 0;
padding: 0 12px 12px;
border: 1px solid #a0a0a0;
background: #fff;
`

const HomeTitle = styled.div`
display: flex;
align-items: center;
gap: 16px;
height: 52px;
h1 {
  margin: 0;
  padding-bottom: 2px;
  font-size: 20px;
  font-weight: 400;
  line-height: 28px;
}
`

const Panel = styled.section`
flex: 1;
border: 1px solid #eee;
`

const PanelTools = styled.div`
display: flex;
align-items: center;
height: 31px;
padding: 0 7px;
gap: 4px;
border-bottom: 1px solid #a0a0a0;
background: linear-gradient(#fff, #eee);
white-space: nowrap;
`

const Combo = styled.div`
position: relative;
width: ${props => props.$w}px;
height: 24px;
margin-left: 1px;
background: #fff;
input, select {
  width: 100%;
  height: 24px;
  padding: 0 16px 0 6px;
  appearance: none;
  outline: none;
}
svg {
  position: absolute;
  top: 11px;
  right: 4px;
  pointer-events: none;
}
`

const Group = styled.section`
padding-bottom: 3px;
`

const GroupHead = styled.div`
display: flex;
align-items: center;
height: 21px;
margin-bottom: 2px;
padding: 0 8px 2px 12px;
h2 {
  margin: 0 4px 0 0;
  color: #1a3f9c;
  font-size: 12px;
  font-weight: 400;
}
hr {
  flex: 1;
  margin: 0 8px 0 0;
  border: 0;
  border-top: 1px solid #dfe6f2;
}
`

const Groups = styled.div`
padding-top: 1px;
`

const Items = styled.div`
display: grid;
grid-template-columns: repeat(auto-fill, 72px);
grid-auto-rows: 75px;
column-gap: 3px;
padding: 0 40px 0 1px;
`

const Item = styled.button`
display: flex;
flex-direction: column;
align-items: center;
align-self: start;
gap: 3px;
min-height: 54px;
padding-top: 1px;
outline: ${props => (props.$on ? '1px dotted #000' : 'none')};
outline-offset: -1px;
line-height: 17px;
white-space: pre;
`

const ViewTabs = styled.div`
display: flex;
flex: none;
align-items: center;
height: 27px;
padding: 0 6px;
`

const ViewTab = styled.button`
display: flex;
align-items: center;
gap: 3px;
height: 21px;
padding: 0 ${props => (props.$on ? 6 : 0)}px 0 1px;
border: 1px solid ${props => (props.$on ? '#3399ff' : 'transparent')};
background: ${props => (props.$on ? '#fff' : 'none')};
`

const Status = styled.footer`
flex: none;
height: 24px;
padding: 3px 5px;
border-top: 1px solid #fff;
background: #f0f0f0;
`

const Taskbar = styled.div`
display: flex;
flex: none;
height: 5px;
padding-left: 113px;
gap: 4px;
border-top: 1px solid #444;
background: #66c8ea;
`

const TaskSlot = styled.span`
width: ${props => props.$w}px;
border: 0 solid #2c6f8e;
border-width: 0 1px;
background: ${props => (props.$on ? '#a5dcf2' : '#5ac0e3')};
`

// red marks drawn over the tree
const Mark = styled.div`
position: absolute;
top: ${props => props.$y}px;
left: ${props => props.$x}px;
width: ${props => props.$w}px;
height: ${props => props.$h}px;
border: 3px solid #f53a3a;
pointer-events: none;
`

const Pointer = styled.svg`
position: absolute;
top: 298px;
left: 8px;
pointer-events: none;
`

// ---------- data ----------

const tree = [
  { level: 0, icon: 'iis', label: '起始页', line: 'M3.500 10.500V20M3.500 10.500H14' },
  { level: 0, icon: 'host', label: 'HWSTEST (HWSTEST', open: true, on: true },
  { level: 1, icon: 'pool', label: '应用程序池', line: 'M3.500 0V20M3.500 10.500H14' },
  { level: 1, icon: 'sites', label: '网站', open: true },
  { level: 2, icon: 'site', label: 'dede.frq.work' },
  { level: 2, icon: 'siteStopped', label: 'Default Web S' },
  { level: 2, icon: 'site', label: 'FTP_HWS' },
  { level: 2, icon: 'site', label: 'PhpMyAdmin_' },
  { level: 2, icon: 'site', label: 'test.frq.worke' },
  { level: 2, icon: 'site', label: 'teswtsdfds' },
  { level: 2, icon: 'site', label: '护卫神·主机大师' }
]

const groups = [
  {
    title: 'ASP.NET',
    items: [
      ['compile', '.NET 编译'],
      ['notFound', '.NET 错误页'],
      ['globalize', '.NET 全球化'],
      ['authorize', '.NET 授权规\n则'],
      ['trust', '.NET 信任级\n别'],
      ['smtp', 'SMTP 电子\n邮件'],
      ['session', '会话状态'],
      ['machineKey', '计算机密钥'],
      ['connString', '连接字符串'],
      ['provider', '提供程序'],
      ['pages', '页面和控件'],
      ['checkList', '应用程序设\n置']
    ]
  },
  {
    title: 'FTP',
    items: [
      ['ftpIp', 'FTP IP 地址\n和域限制'],
      ['ftpSsl', 'FTP SSL 设\n置'],
      ['ftpLogin', 'FTP 登录尝\n试限制'],
      ['ftpWall', 'FTP 防火墙\n支持'],
      ['ftpBrowse', 'FTP 目录浏\n览'],
      ['ftpFilter', 'FTP 请求筛\n选'],
      ['ftpLog', 'FTP 日志'],
      ['ftpAuth', 'FTP 身份验\n证'],
      ['ftpRules', 'FTP 授权规\n则'],
      ['ftpMessage', 'FTP 消息'],
      ['ftpIsolate', 'FTP 用户隔\n离']
    ]
  },
  {
    title: 'IIS',
    items: [
      ['asp', 'ASP'],
      ['cgi', 'CGI'],
      ['fastCgi', 'FastCGI 设\n置'],
      ['fastCgi', 'HTTP 响应标\n头'],
      ['redirect', 'HTTP 重定向'],
      ['ipLimit', 'IP 地址和域\n限制'],
      ['isapiLimit', 'ISAPI 和 CGI\n限制'],
      ['isapiFilter', 'ISAPI 筛选器'],
      ['mime', 'MIME 类型'],
      ['rewrite', 'URL 重写'],
      ['handler', '处理程序映\n射'],
      ['notFound', '错误页'],
      ['certificate', '服务器证书'],
      ['worker', '工作进程'],
      ['modules', '模块'],
      ['defaultDoc', '默认文档'],
      ['browse', '目录浏览'],
      ['requestFilter', '请求筛选'],
      ['log', '日志'],
      ['identity', '身份验证'],
      ['authorize', '授权规则'],
      ['outputCache', '输出缓存'],
      ['compress', '压缩']
    ]
  },
  {
    title: '管理',
    items: [
      ['delegate', '功能委派'],
      ['checkList', '共享的配置'],
      ['editor', '配置编辑器']
    ]
  }
]

function Expander({ node }) {
  return (
    <svg width="14" height="20" viewBox="0 0 14 20" aria-hidden="true">
      {node.line && <path d={node.line} fill="none" stroke="#777" strokeDasharray="1 1" />}
      {!node.line && <path d="M11.500 10.500H14" stroke="#777" strokeDasharray="1 1" />}
      {node.open && <path d="M7 7.500V13H1Z" fill="#555" stroke="#222" strokeWidth="0.800" />}
      {!node.line && !node.open && (
        <g>
          <path d="M3.500 0V5M3.500 16V20" stroke="#777" strokeDasharray="1 1" />
          <path d="M2.500 6.500L6.500 10.500 2.500 14.500Z" fill="#fff" stroke="#555" />
        </g>
      )}
    </svg>
  )
}

function Connections() {
  return (
    <Side>
      <SideTitle>连接</SideTitle>
      <SideTools>
        <ToolButton aria-label="连接"><Icon name="connect" /><Caret /></ToolButton>
        <ToolButton aria-label="保存" disabled $before={1}><Icon name="save" /></ToolButton>
        <Divider $h={15} $before={2} />
        <ToolButton aria-label="向上" disabled><Icon name="up" size={15} /></ToolButton>
        <Divider $h={15} $before={2} />
        <ToolButton aria-label="断开"><Icon name="disconnect" /></ToolButton>
      </SideTools>
      <Tree>
        {tree.map(node => (
          <TreeRow key={node.label} $level={node.level}>
            <Expander node={node} />
            <TreeLink href="#" $on={node.on}>
              <Icon name={node.icon} />
              <span>{node.label}</span>
            </TreeLink>
          </TreeRow>
        ))}
      </Tree>
      <ScrollBar>
        <ScrollButton aria-label="向左">
          <svg width="6" height="9" viewBox="0 0 6 9"><path d="M5 .5L1 4.500 5 8.500" fill="none" stroke="#555" strokeWidth="1.500" /></svg>
        </ScrollButton>
        <Thumb>
          <svg width="8" height="7" viewBox="0 0 8 7"><path d="M1 0v7M4 0v7M7 0v7" stroke="#555" strokeWidth="1.500" /></svg>
        </Thumb>
        <ScrollButton aria-label="向右" $end>
          <svg width="6" height="9" viewBox="0 0 6 9"><path d="M1 .5L5 4.500 1 8.500" fill="none" stroke="#555" strokeWidth="1.500" /></svg>
        </ScrollButton>
      </ScrollBar>
    </Side>
  )
}

function FeatureGroup({ group, selected, onSelect }) {
  return (
    <Group>
      <GroupHead>
        <h2>{group.title}</h2>
        <hr />
        <ToolButton aria-label={group.title}>
          <svg width="9" height="6" viewBox="0 0 9 6"><path d="M1 5L4.500 1.500 8 5" fill="none" stroke="#222" strokeWidth="1.500" /></svg>
        </ToolButton>
      </GroupHead>
      <Items>
        {group.items.map(([icon, label]) => (
          <Item key={label} $on={selected === label} onClick={() => onSelect(label)}>
            <Icon name={icon} size={32} />
            <span>{label}</span>
          </Item>
        ))}
      </Items>
    </Group>
  )
}

export default function App() {
  const [filter, setFilter] = useState('')
  const [groupBy, setGroupBy] = useState('area')
  const [selected, setSelected] = useState('.NET 编译')

  return (
    <Screen>
      <GlobalStyle />
      <HostTabs>
        <HostTab><Icon name="servers" />服务器</HostTab>
        <HostTab $on><Icon name="machine" />阿里云</HostTab>
      </HostTabs>
      <Frame>
        <TitleBar>
          <Icon name="iis" defs />
          <TitleText>Internet Information Services (IIS)管理器</TitleText>
        </TitleBar>
        <AddressRow>
          <NavPair>
            <NavButton aria-label="后退">
              <svg width="20" height="20" viewBox="0 0 20 20">
                <circle cx="10" cy="10" r="9" fill="#b0c0d3" stroke="#80868f" strokeWidth="1.500" />
                <path d="M15 10H6M10 5.500L5.500 10 10 14.500" fill="none" stroke="#777e88" strokeWidth="2" />
              </svg>
            </NavButton>
            <NavButton aria-label="前进" disabled>
              <svg width="20" height="20" viewBox="0 0 20 20">
                <circle cx="10" cy="10" r="9" fill="#a7bbd4" stroke="#8e9db1" />
                <path d="M5 10h9M10 5.500L14.500 10 10 14.500" fill="none" stroke="#b9c7d9" strokeWidth="1.500" />
              </svg>
            </NavButton>
          </NavPair>
          <Address>
            <Icon name="host" />
            <Crumb />
            <CrumbLink href="#">HWSTEST</CrumbLink>
            <Crumb />
          </Address>
        </AddressRow>
        <MenuBar>
          <ToolButton>文件(F)</ToolButton>
          <ToolButton>视图(V)</ToolButton>
          <ToolButton>帮助(H)</ToolButton>
        </MenuBar>
        <Work>
          <Connections />
          <MainColumn>
            <Home>
              <HomeTitle>
                <Icon name="host" size={34} />
                <h1>HWSTEST 主页</h1>
              </HomeTitle>
              <Panel>
                <PanelTools>
                  <label htmlFor="filter">筛选:</label>
                  <Combo $w={122}>
                    <input id="filter" value={filter} onChange={e => setFilter(e.target.value)} />
                    <Caret />
                  </Combo>
                  <ToolButton disabled><Icon name="funnel" />开始(G)</ToolButton>
                  <ToolButton aria-label="开始选项" disabled $before={8}><Caret color="#888" /></ToolButton>
                  <ToolButton $gap={3}><Icon name="showAll" />全部显示(A)</ToolButton>
                  <Divider $h={20} $before={7} />
                  <label htmlFor="groupBy">分组依据:</label>
                  <Combo $w={116}>
                    <select id="groupBy" value={groupBy} onChange={e => setGroupBy(e.target.value)}>
                      <option value="area">区域</option>
                      <option value="none">不进行分组</option>
                    </select>
                    <Caret />
                  </Combo>
                  <ToolButton aria-label="视图"><Icon name="viewGrid" /><Caret /></ToolButton>
                </PanelTools>
                <Groups>
                  {groups.map(group => (
                    <FeatureGroup key={group.title} group={group} selected={selected} onSelect={setSelected} />
                  ))}
                </Groups>
              </Panel>
            </Home>
            <ViewTabs>
              <ViewTab $on><Icon name="features" />功能视图</ViewTab>
              <ViewTab><Icon name="content" />内容视图</ViewTab>
            </ViewTabs>
          </MainColumn>
        </Work>
        <Status>就绪</Status>
        <Taskbar>
          <TaskSlot $w={55} />
          <TaskSlot $w={66} />
          <TaskSlot $w={52} />
          <TaskSlot $w={60} $on />
        </Taskbar>
      </Frame>
      <Mark $x={40} $y={207} $w={83} $h={28} />
      <Mark $x={59} $y={283} $w={111} $h={32} />
      <Pointer width="68" height="100" viewBox="0 0 68 100" aria-hidden="true">
        <path d="M66 0L48 11 52 13 1 97 3 98 58 18 62 19Z" fill="#f53a3a" />
      </Pointer>
    </Screen>
  )
}
